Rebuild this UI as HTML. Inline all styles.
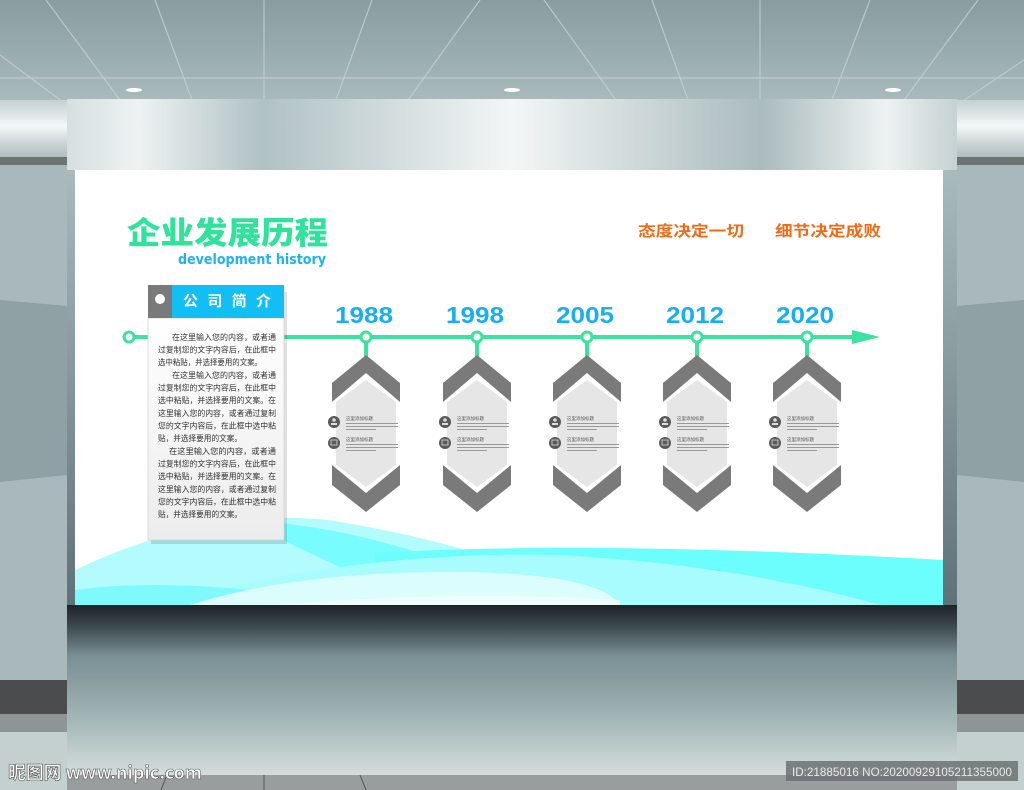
<!DOCTYPE html>
<html><head><meta charset="utf-8"><style>
html,body{margin:0;padding:0;width:1024px;height:790px;overflow:hidden;background:#a9b8bb}
svg{display:block}
text{font-family:"Liberation Sans","Noto Sans CJK SC",sans-serif}
.cn{font-family:"Noto Sans CJK SC","WenQuanYi Zen Hei",sans-serif}
</style></head><body>
<svg width="1024" height="790" viewBox="0 0 1024 790" xmlns="http://www.w3.org/2000/svg">
<defs>
<linearGradient id="ceil" x1="0" y1="0" x2="0" y2="1">
<stop offset="0" stop-color="#8a9d9e"/><stop offset="1" stop-color="#a8babc"/></linearGradient>
<linearGradient id="sidewall" x1="0" y1="0" x2="0" y2="1">
<stop offset="0" stop-color="#c4d0d2"/><stop offset="0.45" stop-color="#f4f7f7"/><stop offset="0.75" stop-color="#c9d4d5"/><stop offset="1" stop-color="#aebcbe"/></linearGradient>
<linearGradient id="panelTop" x1="0" y1="0" x2="1" y2="0">
<stop offset="0" stop-color="#d6dfe0"/><stop offset="0.08" stop-color="#eef2f2"/><stop offset="0.22" stop-color="#b0c1c4"/><stop offset="0.5" stop-color="#f3f6f6"/><stop offset="0.78" stop-color="#aabbbe"/><stop offset="0.92" stop-color="#eef2f2"/><stop offset="1" stop-color="#c5d1d3"/></linearGradient>
<linearGradient id="panelSide" x1="0" y1="0" x2="0" y2="1">
<stop offset="0" stop-color="#a9babd"/><stop offset="1" stop-color="#5e7278"/></linearGradient>
<linearGradient id="panelLow" x1="0" y1="0" x2="0" y2="1">
<stop offset="0" stop-color="#1f2326"/><stop offset="0.12" stop-color="#3a474c"/><stop offset="0.3" stop-color="#7a8f95"/><stop offset="0.6" stop-color="#9aaeb0"/><stop offset="1" stop-color="#d3ddda"/></linearGradient>
<linearGradient id="card" x1="0" y1="0" x2="0" y2="1">
<stop offset="0" stop-color="#ffffff"/><stop offset="1" stop-color="#ececec"/></linearGradient>
<clipPath id="bd"><rect x="75" y="170" width="868" height="435"/></clipPath>
</defs>
<rect x="0" y="0" width="1024" height="100" fill="url(#ceil)"/>
<g stroke="#c3d2d0" stroke-width="1.2" opacity="0.8">
<line x1="46" y1="0" x2="120" y2="100"/><line x1="155" y1="0" x2="192" y2="100"/><line x1="264" y1="0" x2="264" y2="100"/><line x1="372" y1="0" x2="336" y2="100"/><line x1="480" y1="0" x2="408" y2="100"/>
<line x1="544" y1="0" x2="616" y2="100"/><line x1="652" y1="0" x2="688" y2="100"/><line x1="760" y1="0" x2="760" y2="100"/><line x1="870" y1="0" x2="832" y2="100"/><line x1="978" y1="0" x2="904" y2="100"/>
<line x1="0" y1="78" x2="1024" y2="78"/><line x1="0" y1="55" x2="67" y2="105"/><line x1="1024" y1="60" x2="957" y2="105"/>
</g>
<ellipse cx="134" cy="90" rx="8" ry="2" fill="#fff"/><ellipse cx="512" cy="90" rx="8" ry="2" fill="#fff"/><ellipse cx="893" cy="90" rx="8" ry="2" fill="#fff"/>
<!-- side walls -->
<rect x="0" y="100" width="1024" height="58" fill="url(#sidewall)"/>
<rect x="0" y="157" width="1024" height="8" fill="#6b7373"/>
<rect x="0" y="165" width="1024" height="515" fill="#a9b8bb"/>
<polygon points="0,300 67,306 67,475 0,482" fill="#8fa1a4"/>
<polygon points="957,306 1024,300 1024,482 957,475" fill="#8fa1a4"/>
<rect x="0" y="680" width="1024" height="34" fill="#4a4c4d"/>
<rect x="0" y="714" width="1024" height="76" fill="#8e9596"/>
<rect x="0" y="732" width="1024" height="58" fill="#c4cfd0"/>
<!-- wall panel -->
<rect x="67" y="99" width="890" height="80" fill="url(#panelTop)"/>
<rect x="67" y="170" width="890" height="435" fill="url(#panelSide)"/>
<rect x="67" y="605" width="890" height="170" fill="url(#panelLow)"/>
<rect x="67" y="775" width="890" height="15" fill="#9a9d9e"/>
<g stroke="#555" stroke-width="1"><line x1="167" y1="775" x2="161" y2="790"/><line x1="264" y1="775" x2="264" y2="790"/><line x1="360" y1="775" x2="366" y2="790"/></g>
<!-- board -->
<rect x="75" y="170" width="868" height="435" fill="#ffffff"/>
<g clip-path="url(#bd)">
<path d="M75 570 Q160 530 240 520 Q300 515 340 522 Q420 535 500 560 L943 605 L75 605Z" fill="#b3fbfc"/>
<path d="M240 520 Q360 525 487 578 L943 605 L420 605Z" fill="#78fcfd"/>
<path d="M375 553 Q600 540 943 560 L943 605 L375 605Z" fill="#6cfdfd"/>
<path d="M560 555 Q620 560 720 570 L790 605 L560 605Z" fill="#2dfefe" opacity="0.6"/>
<path d="M160 605 Q350 550 560 555 Q740 565 880 605Z" fill="#a8fcfd"/>
<path d="M75 590 Q150 580 250 590 L250 605 L75 605Z" fill="#7ffafc"/>
<path d="M190 605 Q300 570 470 572 Q600 575 620 605Z" fill="#dcfdfe"/>
<path d="M280 605 Q450 590 620 600 L620 605Z" fill="#eefeff"/>
</g>
<!-- titles -->
<text x="127" y="244" class="cn" font-size="31" font-weight="900" fill="#2ee39a" textLength="201" lengthAdjust="spacingAndGlyphs">企业发展历程</text>
<text x="178" y="264" font-family="DejaVu Sans" font-size="14" font-weight="bold" fill="#1fb2f0" textLength="148" lengthAdjust="spacingAndGlyphs" style="font-family:'DejaVu Sans',sans-serif">development history</text>
<text x="638" y="236" class="cn" font-size="15" font-weight="bold" fill="#f26a14" textLength="106" lengthAdjust="spacingAndGlyphs">态度决定一切</text>
<text x="775" y="236" class="cn" font-size="15" font-weight="bold" fill="#f26a14" textLength="106" lengthAdjust="spacingAndGlyphs">细节决定成败</text>
<!-- timeline -->
<line x1="134" y1="337" x2="858" y2="337" stroke="#3be39e" stroke-width="4"/>
<polygon points="852,330 880,337 852,344" fill="#3be39e"/>
<circle cx="129" cy="337" r="5" fill="#fff" stroke="#3be39e" stroke-width="3"/>
<g font-size="23" font-weight="bold" fill="#16aef5" style="font-family:'DejaVu Sans',sans-serif">
<text x="335" y="323" textLength="58" lengthAdjust="spacingAndGlyphs">1988</text>
<text x="446" y="323" textLength="58" lengthAdjust="spacingAndGlyphs">1998</text>
<text x="556" y="323" textLength="58" lengthAdjust="spacingAndGlyphs">2005</text>
<text x="666" y="323" textLength="58" lengthAdjust="spacingAndGlyphs">2012</text>
<text x="776" y="323" textLength="58" lengthAdjust="spacingAndGlyphs">2020</text>
</g>
<g id="hx">
<line x1="366" y1="337" x2="366" y2="358" stroke="#3be39e" stroke-width="4"/>
<circle cx="366" cy="337" r="5" fill="#fff" stroke="#3be39e" stroke-width="3"/>
<polygon points="366,355 400,383 400,402 366,373 332,402 332,383" fill="#7a7a7a"/>
<polygon points="366,380 396,402 396,465 366,487 336,465 336,402" fill="#e6e6e6"/>
<polygon points="332,465 366,493 400,465 400,485 366,512 332,485" fill="#7a7a7a"/>
<circle cx="334" cy="422" r="6" fill="#5a5a5a"/><circle cx="334" cy="443" r="6" fill="#5a5a5a"/>
<circle cx="334" cy="420" r="1.8" fill="#ddd"/><rect x="331" y="423" width="6" height="2" fill="#ddd"/>
<rect x="331" y="440" width="6" height="5" fill="none" stroke="#ddd" stroke-width="0.8"/>
<text x="346" y="420" class="cn" font-size="4.5" fill="#555">这里添加标题</text>
<rect x="346" y="423" width="52" height="1" fill="#999"/><rect x="346" y="426" width="52" height="1" fill="#999"/><rect x="346" y="429" width="30" height="1" fill="#999"/>
<text x="346" y="441" class="cn" font-size="4.5" fill="#555">这里添加标题</text>
<rect x="346" y="444" width="52" height="1" fill="#999"/><rect x="346" y="447" width="52" height="1" fill="#999"/><rect x="346" y="450" width="30" height="1" fill="#999"/>
</g>
<use href="#hx" x="111"/><use href="#hx" x="221"/><use href="#hx" x="331"/><use href="#hx" x="441"/>
<!-- card -->
<rect x="151" y="292" width="136" height="252" fill="#000" opacity="0.12"/>
<rect x="148" y="318" width="136" height="222" fill="url(#card)" stroke="#d5d5d5" stroke-width="0.8"/>
<rect x="148" y="285" width="24" height="33" fill="#7a7a7a"/>
<circle cx="160" cy="299" r="5" fill="#fff"/>
<rect x="172" y="285" width="112" height="33" fill="#11bff5"/>
<text x="183" y="306" class="cn" font-size="15" font-weight="bold" fill="#fff" textLength="88" lengthAdjust="spacing">公司简介</text>
<g class="cn" font-size="8.2" fill="#333">
<text x="172" y="340" textLength="104" lengthAdjust="spacingAndGlyphs">在这里输入您的内容，或者通</text>
<text x="158" y="352.5" textLength="118" lengthAdjust="spacingAndGlyphs">过复制您的文字内容后，在此框中</text>
<text x="158" y="365" textLength="104" lengthAdjust="spacingAndGlyphs">选中粘贴，并选择要用的文案。</text>
<text x="172" y="378" textLength="104" lengthAdjust="spacingAndGlyphs">在这里输入您的内容，或者通</text>
<text x="158" y="390.5" textLength="118" lengthAdjust="spacingAndGlyphs">过复制您的文字内容后，在此框中</text>
<text x="158" y="403" textLength="118" lengthAdjust="spacingAndGlyphs">选中粘贴，并选择要用的文案。在</text>
<text x="158" y="416" textLength="118" lengthAdjust="spacingAndGlyphs">这里输入您的内容，或者通过复制</text>
<text x="158" y="428.5" textLength="118" lengthAdjust="spacingAndGlyphs">您的文字内容后，在此框中选中粘</text>
<text x="158" y="441" textLength="84" lengthAdjust="spacingAndGlyphs">贴，并选择要用的文案。</text>
<text x="169" y="454" textLength="107" lengthAdjust="spacingAndGlyphs">在这里输入您的内容，或者通</text>
<text x="158" y="466.5" textLength="118" lengthAdjust="spacingAndGlyphs">过复制您的文字内容后，在此框中</text>
<text x="158" y="479" textLength="118" lengthAdjust="spacingAndGlyphs">选中粘贴，并选择要用的文案。在</text>
<text x="158" y="492" textLength="118" lengthAdjust="spacingAndGlyphs">这里输入您的内容，或者通过复制</text>
<text x="158" y="504.5" textLength="118" lengthAdjust="spacingAndGlyphs">您的文字内容后，在此框中选中粘</text>
<text x="158" y="517" textLength="84" lengthAdjust="spacingAndGlyphs">贴，并选择要用的文案。</text>
</g>
<!-- watermarks -->
<text x="8" y="779" class="cn" font-size="18" font-weight="bold" fill="#fff" stroke="#555" stroke-width="0.6" textLength="194" lengthAdjust="spacingAndGlyphs">昵图网 www.nipic.com</text>
<rect x="786" y="761" width="232" height="20" fill="#6d7172" opacity="0.85"/>
<text x="792" y="776" font-size="12" fill="#e8e8e8" textLength="220" lengthAdjust="spacingAndGlyphs">ID:21885016 NO:20200929105211355000</text>
</svg>
</body></html>
